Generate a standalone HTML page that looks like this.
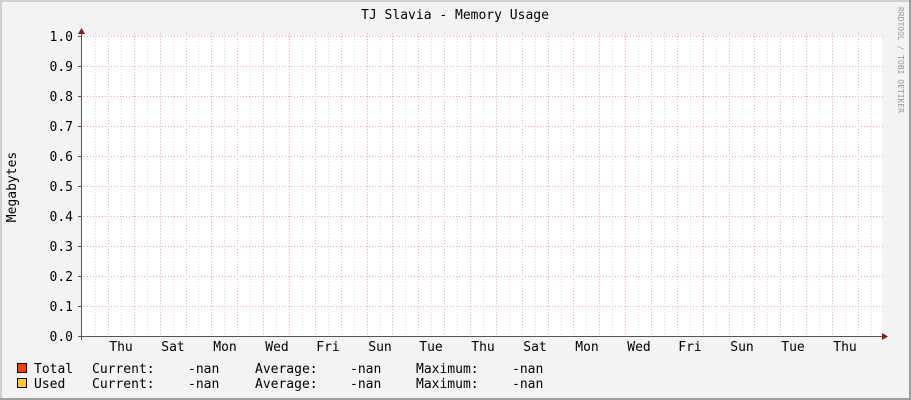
<!DOCTYPE html>
<html><head><meta charset="utf-8"><style>
html,body{margin:0;padding:0;background:#f3f3f3}
svg{display:block}
text{font-family:"DejaVu Sans Mono","Liberation Mono",monospace;fill:#000}
</style></head><body>
<svg width="911" height="400" xmlns="http://www.w3.org/2000/svg">
<rect x="0" y="0" width="911" height="400" fill="#f3f3f3"/>
<rect x="0" y="0" width="911" height="2" fill="#cfcfcf"/>
<rect x="0" y="0" width="2" height="400" fill="#cfcfcf"/>
<rect x="0" y="398" width="911" height="2" fill="#9e9e9e"/>
<rect x="909" y="0" width="2" height="400" fill="#9e9e9e"/>
<rect x="81" y="36" width="801" height="300" fill="#fff"/>
<path stroke="#d8d8d8" stroke-width="1" stroke-dasharray="1,2" fill="none" d="M95.5 33V336M121.5 33V336M147.5 33V336M173.5 33V336M198.5 33V336M224.5 33V336M250.5 33V336M276.5 33V336M302.5 33V336M328.5 33V336M354.5 33V336M380.5 33V336M405.5 33V336M431.5 33V336M457.5 33V336M483.5 33V336M509.5 33V336M535.5 33V336M561.5 33V336M586.5 33V336M612.5 33V336M638.5 33V336M664.5 33V336M690.5 33V336M716.5 33V336M742.5 33V336M767.5 33V336M793.5 33V336M819.5 33V336M845.5 33V336M871.5 33V336"/>
<path stroke="#f4a8a8" stroke-width="1" stroke-dasharray="1,2" fill="none" d="M108.5 33V339M134.5 33V339M160.5 33V339M186.5 33V339M211.5 33V339M237.5 33V339M263.5 33V339M289.5 33V339M315.5 33V339M341.5 33V339M367.5 33V339M392.5 33V339M418.5 33V339M444.5 33V339M470.5 33V339M496.5 33V339M522.5 33V339M548.5 33V339M573.5 33V339M599.5 33V339M625.5 33V339M651.5 33V339M677.5 33V339M703.5 33V339M729.5 33V339M754.5 33V339M780.5 33V339M806.5 33V339M832.5 33V339M858.5 33V339"/>
<path stroke="#f0a8a8" stroke-width="1" stroke-dasharray="1,2" fill="none" d="M78 36.5H884M78 66.5H884M78 96.5H884M78 126.5H884M78 156.5H884M78 186.5H884M78 216.5H884M78 246.5H884M78 276.5H884M78 306.5H884"/>
<path stroke="#555" stroke-width="1" d="M78 36.5H81M78 66.5H81M78 96.5H81M78 126.5H81M78 156.5H81M78 186.5H81M78 216.5H81M78 246.5H81M78 276.5H81M78 306.5H81M78 336.5H81"/>
<path stroke="#555" stroke-width="1" d="M81.5 32V340M78 336.5H884"/>
<polygon points="78,34 85,34 81.5,28" fill="#8a1a1a"/>
<polygon points="882,333 882,340 888,336.5" fill="#8a1a1a"/>
<text x="455" y="19" font-size="13" text-anchor="middle">TJ Slavia - Memory Usage</text>
<text transform="translate(16,187) rotate(-90)" font-size="13" text-anchor="middle">Megabytes</text>
<text transform="translate(898,60) rotate(90)" font-size="8" fill="#999" style="fill:#9a9a9a" text-anchor="middle">RRDTOOL / TOBI OETIKER</text>
<g font-size="13" text-anchor="end">
<text x="73" y="41">1.0</text><text x="73" y="71">0.9</text><text x="73" y="101">0.8</text><text x="73" y="131">0.7</text><text x="73" y="161">0.6</text><text x="73" y="191">0.5</text><text x="73" y="221">0.4</text><text x="73" y="251">0.3</text><text x="73" y="281">0.2</text><text x="73" y="311">0.1</text><text x="73" y="341">0.0</text>
</g>
<g font-size="13" text-anchor="middle">
<text x="121" y="351">Thu</text><text x="173" y="351">Sat</text><text x="225" y="351">Mon</text><text x="277" y="351">Wed</text><text x="328" y="351">Fri</text><text x="380" y="351">Sun</text><text x="431" y="351">Tue</text><text x="483" y="351">Thu</text><text x="535" y="351">Sat</text><text x="587" y="351">Mon</text><text x="639" y="351">Wed</text><text x="690" y="351">Fri</text><text x="742" y="351">Sun</text><text x="793" y="351">Tue</text><text x="845" y="351">Thu</text>
</g>
<rect x="17.5" y="363.5" width="9" height="9" fill="#ff4400" stroke="#000"/>
<rect x="17.5" y="378.5" width="9" height="9" fill="#ffc635" stroke="#000"/>
<g font-size="13">
<text x="34" y="373">Total</text><text x="92" y="373">Current:</text><text x="188" y="373">-nan</text><text x="255" y="373">Average:</text><text x="350" y="373">-nan</text><text x="416" y="373">Maximum:</text><text x="512" y="373">-nan</text>
<text x="34" y="388">Used</text><text x="92" y="388">Current:</text><text x="188" y="388">-nan</text><text x="255" y="388">Average:</text><text x="350" y="388">-nan</text><text x="416" y="388">Maximum:</text><text x="512" y="388">-nan</text>
</g>
</svg>
</body></html>
